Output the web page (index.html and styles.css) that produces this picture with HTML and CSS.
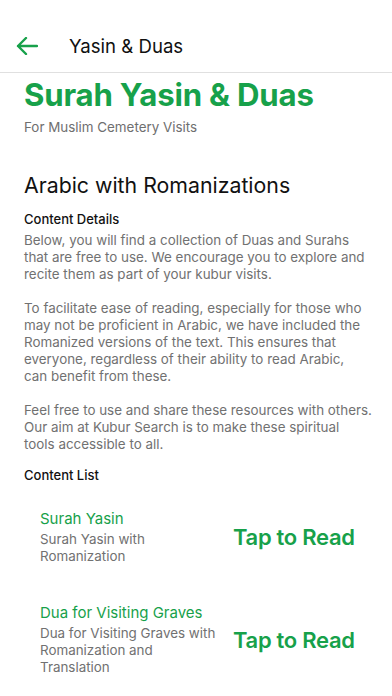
FILE: index.html
```html
<!DOCTYPE html>
<html>
<head>
<meta charset="utf-8">
<link rel="stylesheet" href="styles.css">
</head>
<body>
<div class="app">
  <header class="topbar">
    <svg class="back" width="22" height="18" viewBox="0 0 22 18"><path d="M21 9H2M10 1L2 9l8 8" fill="none" stroke="#17a14a" stroke-width="2.4" stroke-linecap="round" stroke-linejoin="round"/></svg>
    <span class="topbar-title">Yasin &amp; Duas</span>
  </header>
  <main class="content">
    <h1 class="hero">Surah Yasin &amp; Duas</h1>
    <p class="sub">For Muslim Cemetery Visits</p>
    <h2 class="section">Arabic with Romanizations</h2>
    <h3 class="label">Content Details</h3>
    <p class="para">Below, you will find a collection of Duas and Surahs that are free to use. We encourage you to explore and recite them as part of your kubur visits.</p>
    <p class="para">To facilitate ease of reading, especially for those who may not be proficient in Arabic, we have included the Romanized versions of the text. This ensures that everyone, regardless of their ability to read Arabic, <span class="nw">can benefit</span> from these.</p>
    <p class="para">Feel free to use and share these resources with others. Our aim at Kubur Search is to make these spiritual tools accessible to all.</p>
    <h3 class="label list-label">Content List</h3>
    <div class="items">
      <div class="item">
        <div class="item-text">
          <div class="item-title">Surah Yasin</div>
          <div class="item-desc">Surah Yasin with Romanization</div>
        </div>
        <div class="tap">Tap to Read</div>
      </div>
      <div class="item">
        <div class="item-text">
          <div class="item-title">Dua for Visiting Graves</div>
          <div class="item-desc">Dua for Visiting Graves with Romanization and Translation</div>
        </div>
        <div class="tap">Tap to Read</div>
      </div>
    </div>
  </main>
</div>
</body>
</html>
```
FILE: styles.css
```css
* { box-sizing: border-box; }
html, body { margin: 0; padding: 0; background: #fff; }
body { font-family: Inter, Lato, sans-serif; color: #111; }
.app { width: 392px; }
.topbar {
  height: 73px;
  padding-top: 20px;
  display: flex;
  align-items: center;
  border-bottom: 1px solid #e0e0e0;
  padding-left: 16px;
}
.back { display: block; }
.topbar-title { margin-left: 31px; font-size: 18.6px; color: #111; }
.content { padding: 0 20px 0 24px; }
.hero {
  margin: 2px 0 0;
  font-size: 31.2px;
  font-weight: 700;
  color: #17a14a;
  line-height: 40px;
  letter-spacing: -0.2px;
}
.sub { margin: 3px 0 0; font-size: 13.4px; color: #6f6f6f; line-height: 18px; }
.section { margin: 35px 0 0; font-size: 21.3px; font-weight: 400; line-height: 28px; color: #111; }
.label { margin: 11px 0 0; font-size: 13px; font-weight: 500; line-height: 18px; color: #111; }
.para { margin: 4px 0 17px; font-size: 13.4px; line-height: 17px; color: #717171; }
.para + .para { margin-top: 0; }
.para:last-of-type { margin-bottom: 0; }
.nw { white-space: nowrap; }
.list-label { margin-top: 13px; }
.items { padding: 25px 0 0 16px; display: flex; flex-direction: column; gap: 38px; }
.item { display: flex; align-items: center; }
.item-text { width: 182px; }
.item-title { font-size: 15px; color: #17a14a; line-height: 20px; margin-bottom: 2px; }
.item-desc { font-size: 13.4px; line-height: 17px; color: #717171; }
.tap { margin-left: 11px; font-size: 22px; font-weight: 600; color: #17a14a; letter-spacing: -0.3px; }
```
